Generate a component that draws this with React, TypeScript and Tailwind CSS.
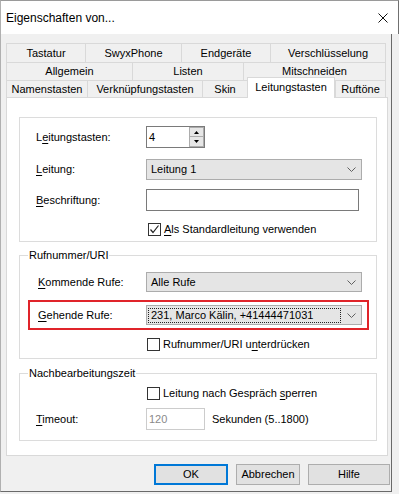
import React from "react";

function U({ children }: { children: React.ReactNode }) {
  return <span className="underline decoration-1 underline-offset-[2px]">{children}</span>;
}

function Chevron() {
  return (
    <svg width="9" height="5" viewBox="0 0 9 5">
      <path d="M0.5 0.5 L4.5 4.5 L8.5 0.5" fill="none" stroke="#606060" strokeWidth="1" />
    </svg>
  );
}

function Dropdown({ text, focused = false, h = "h-[21px]" }: { text: string; focused?: boolean; h?: string }) {
  return (
    <div className={"w-[216px] " + h + " border border-[#acacac] bg-[#e5e5e5] flex items-center pl-[1px]"}>
      <div
        className={
          "w-[193px] h-[15px] flex items-center pl-[2px] border " +
          (focused ? "border-dotted border-[#222]" : "border-transparent")
        }
      >
        {text}
      </div>
      <div className="w-[20px] flex justify-center">
        <Chevron />
      </div>
    </div>
  );
}

function Checkbox({ checked = false }: { checked?: boolean }) {
  return (
    <div className="w-[13px] h-[13px] border border-[#333] bg-white flex items-center justify-center shrink-0">
      {checked && (
        <svg width="11" height="11" viewBox="0 0 11 11">
          <path d="M1.5 5.5 L4 8.5 L9.5 1.5" fill="none" stroke="#222" strokeWidth="1.2" />
        </svg>
      )}
    </div>
  );
}

function Tab({ w, children, last = false }: { w: string; children: React.ReactNode; last?: boolean }) {
  return (
    <div
      className={
        w +
        " h-full border-t border-l border-[#d9d9d9] bg-[#f0f0f0] flex items-center justify-center whitespace-nowrap " +
        (last ? "border-r" : "")
      }
    >
      {children}
    </div>
  );
}

export default function App() {
  return (
    <div className="w-[399px] h-[494px] bg-[#f0f0f0] font-['Liberation_Sans',Arial,sans-serif] text-[11px] text-black overflow-hidden">
      {/* Title bar */}
      <div className="h-[34px] bg-white border-t border-l border-r border-t-[#9a9a9a] border-l-[#b0b0b0] border-r-[#707070] flex items-center justify-between pl-[5px] pr-[10px]">
        <span className="text-[12px]">Eigenschaften von...</span>
        <svg width="10" height="10" viewBox="0 0 10 10">
          <path d="M0.5 0.5L9.5 9.5M9.5 0.5L0.5 9.5" stroke="#111" strokeWidth="1" />
        </svg>
      </div>

      {/* Body */}
      <div className="w-[392px] h-[458px] border-l border-r border-b border-l-[#b0b0b0] border-r-[#6a6a6a] border-b-[#6a6a6a] pt-[9px] pl-[5px]">
        {/* Tabs */}
        <div className="w-[380px] flex flex-col">
          <div className="h-[19px] flex">
            <Tab w="w-[79px]">Tastatur</Tab>
            <Tab w="w-[96px]">SwyxPhone</Tab>
            <Tab w="w-[89px]">Endgeräte</Tab>
            <Tab w="w-[116px]" last>
              Verschlüsselung
            </Tab>
          </div>
          <div className="h-[18px] flex">
            <Tab w="w-[126px]">Allgemein</Tab>
            <Tab w="w-[111px]">Listen</Tab>
            <Tab w="w-[143px]" last>
              Mitschneiden
            </Tab>
          </div>
          <div className="h-[17px] flex items-end">
            <Tab w="w-[81px]">Namenstasten</Tab>
            <Tab w="w-[115px]">Verknüpfungstasten</Tab>
            <Tab w="w-[45px]">Skin</Tab>
            <div className="w-[88px] h-[21px] -mb-[1px] relative z-10 border-t border-l border-r border-[#d9d9d9] bg-white flex items-center justify-center pb-[2px]">
              Leitungstasten
            </div>
            <Tab w="w-[51px]" last>
              Ruftöne
            </Tab>
          </div>
        </div>

        {/* Panel */}
        <div className="w-[382px] h-[359px] border border-[#d9d9d9] bg-white">
          {/* Group 1 */}
          <div className="ml-[12px] mt-[19px] w-[358px] border border-[#dcdcdc] pt-[8px] pb-[5px]">
            <div className="h-[22px] flex items-center pl-[16px]">
              <div className="w-[110px]">
                L<U>e</U>itungstasten:
              </div>
              <div className="w-[59px] h-[22px] border border-[#7a7a7a] flex">
                <div className="flex-1 flex items-center pl-[2px]">4</div>
                <div className="w-[15px] flex flex-col">
                  <div className="h-[10px] border border-[#acacac] bg-[#e6e6e6] flex items-center justify-center">
                    <svg width="5" height="3" viewBox="0 0 5 3">
                      <path d="M0 3 L2.5 0 L5 3 Z" fill="#000" />
                    </svg>
                  </div>
                  <div className="h-[10px] border border-t-0 border-[#acacac] bg-[#e6e6e6] flex items-center justify-center">
                    <svg width="5" height="3" viewBox="0 0 5 3">
                      <path d="M0 0 L2.5 3 L5 0 Z" fill="#000" />
                    </svg>
                  </div>
                </div>
              </div>
            </div>
            <div className="mt-[11px] h-[21px] flex items-center pl-[16px]">
              <div className="w-[110px]">
                <U>L</U>eitung:
              </div>
              <Dropdown text="Leitung 1" />
            </div>
            <div className="mt-[9px] h-[22px] flex items-center pl-[16px]">
              <div className="w-[110px]">
                <U>B</U>eschriftung:
              </div>
              <div className="w-[213px] h-[22px] border border-[#7a7a7a] bg-white" />
            </div>
            <div className="mt-[12px] h-[13px] flex items-center gap-[3px] pl-[128px]">
              <Checkbox checked />
              <span>
                <U>A</U>ls Standardleitung verwenden
              </span>
            </div>
          </div>

          {/* Group 2 */}
          <fieldset className="ml-[12px] mt-[6px] w-[358px] border border-[#dcdcdc] pt-[10px] pb-[7px]">
            <legend className="ml-[8px] px-[1px] leading-[14px]">Rufnummer/URI</legend>
            <div className="h-[20px] flex items-center pl-[18px]">
              <div className="w-[108px]">
                <U>K</U>ommende Rufe:
              </div>
              <Dropdown text="Alle Rufe" h="h-[20px]" />
            </div>
            <div className="mt-[8px] ml-[8px] w-[341px] h-[30px] border-2 border-[#e0242a] flex items-center pl-[8px]">
              <div className="w-[108px]">
                <U>G</U>ehende Rufe:
              </div>
              <Dropdown text="231, Marco Kälin, +41444471031" focused h="h-[20px]" />
            </div>
            <div className="mt-[8px] h-[13px] flex items-center gap-[3px] pl-[127px]">
              <Checkbox />
              <span>
                Rufnummer/URI u<U>n</U>terdrücken
              </span>
            </div>
          </fieldset>

          {/* Group 3 */}
          <fieldset className="ml-[12px] mt-[7px] w-[358px] border border-[#dcdcdc] pt-[7px] pb-[10px]">
            <legend className="ml-[8px] px-[1px] leading-[14px]">Nachbearbeitungszeit</legend>
            <div className="h-[13px] flex items-center gap-[3px] pl-[127px]">
              <Checkbox />
              <span>
                Leitung nach Gespräch <U>s</U>perren
              </span>
            </div>
            <div className="mt-[8px] h-[22px] flex items-center pl-[16px]">
              <div className="w-[110px]">
                <U>T</U>imeout:
              </div>
              <div className="w-[59px] h-[22px] border border-[#cccccc] bg-white flex items-center pl-[2px] text-[#8a8a8a]">
                120
              </div>
              <span className="ml-[7px]">Sekunden (5..1800)</span>
            </div>
          </fieldset>
        </div>

        {/* Buttons */}
        <div className="mt-[8px] flex gap-[8px] pl-[148px]">
          <div className="w-[74px] h-[21px] border-2 border-[#0078d7] bg-[#e1e1e1] flex items-center justify-center">
            OK
          </div>
          <div className="w-[64px] h-[21px] border border-[#adadad] bg-[#e1e1e1] flex items-center justify-center">
            Abbrechen
          </div>
          <div className="w-[82px] h-[21px] border border-[#adadad] bg-[#e1e1e1] flex items-center justify-center">
            Hilfe
          </div>
        </div>
      </div>
    </div>
  );
}
